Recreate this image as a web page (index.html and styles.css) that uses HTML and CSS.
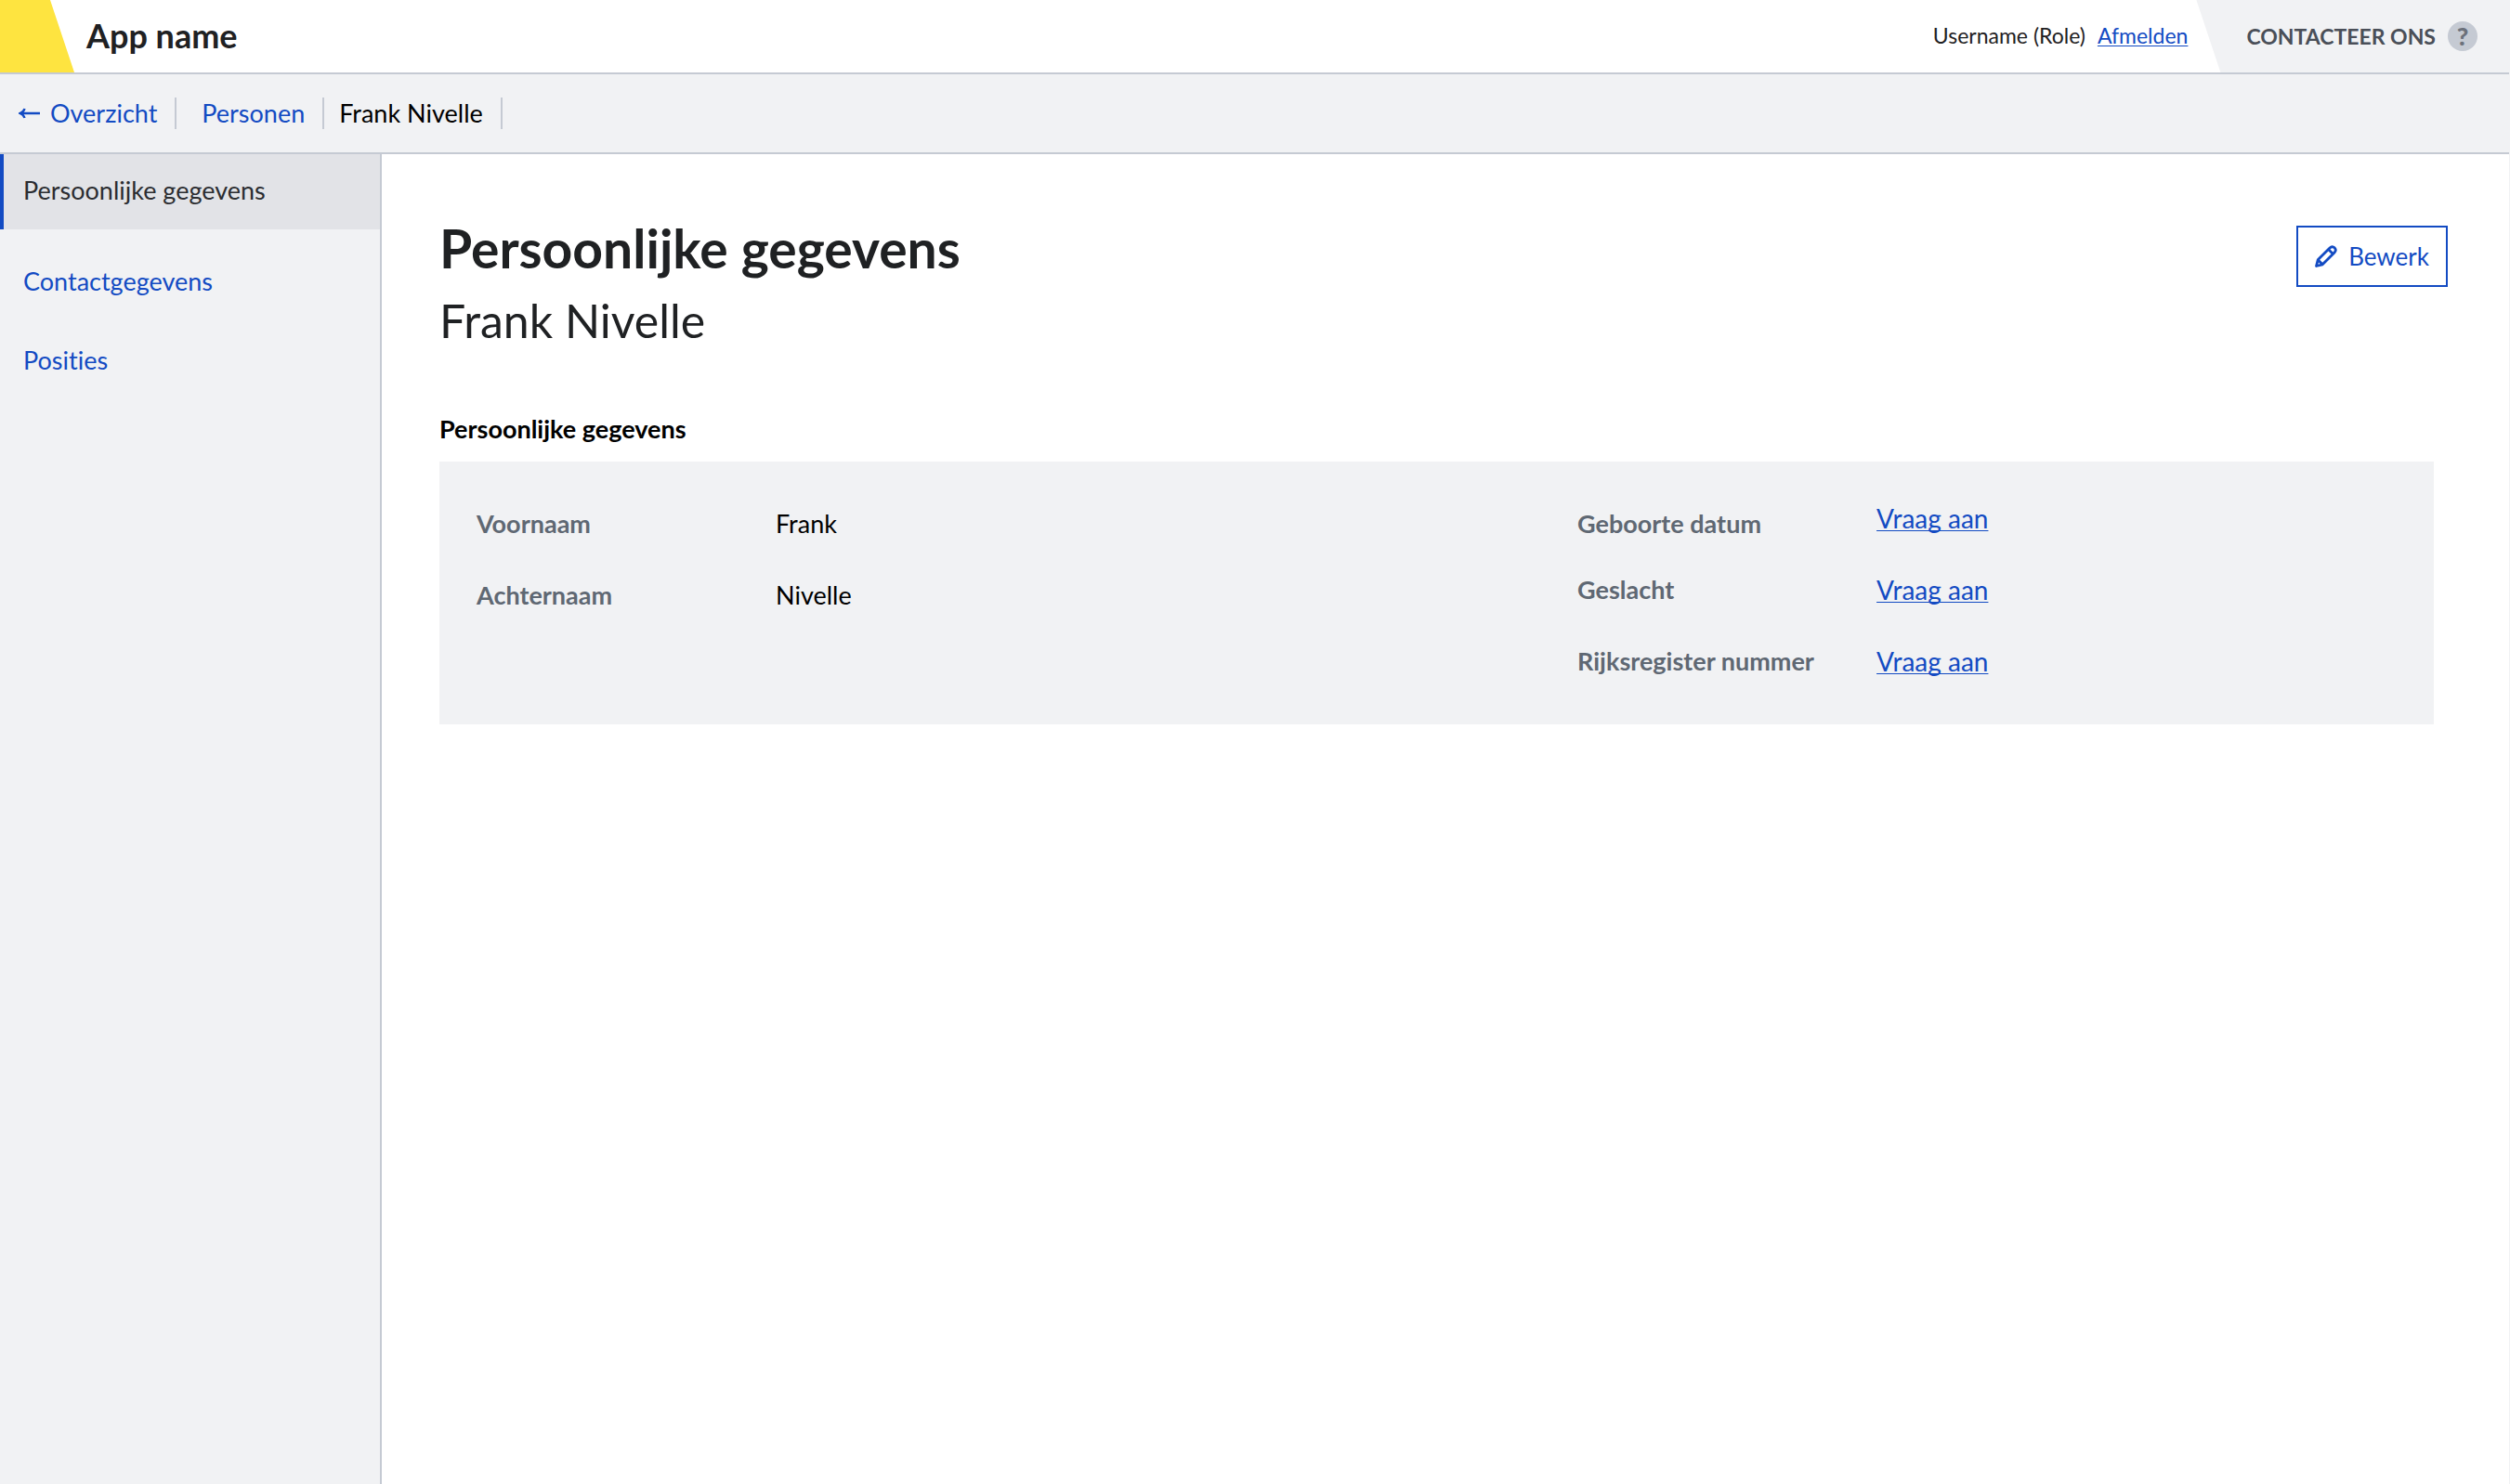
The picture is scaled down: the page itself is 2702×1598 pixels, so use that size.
FILE: index.html
```
<!DOCTYPE html>
<html lang="nl">
<head>
<meta charset="utf-8">
<meta name="viewport" content="width=device-width, initial-scale=1">
<title>Persoonlijke gegevens - Frank Nivelle</title>
<link rel="stylesheet" href="styles.css">
</head>
<body>
<header class="topbar">
  <span class="brand-mark"></span>
  <span class="app-name">App name</span>
  <div class="user">
    <span>Username (Role)</span>
    <a class="link" href="#">Afmelden</a>
  </div>
  <button class="contact" type="button">
    <span>CONTACTEER ONS</span>
    <span class="help">?</span>
  </button>
</header>

<nav class="breadcrumbs" aria-label="Kruimelpad">
  <a class="crumb crumb-back" href="#">
    <svg class="arrow" viewBox="0 0 24 14" aria-hidden="true"><path d="M2 7H23M6.500 2Q5.500 5.500 1.500 7Q5.500 8.500 6.500 12"/></svg>
    <span>Overzicht</span>
  </a>
  <a class="crumb crumb-parent" href="#">Personen</a>
  <span class="crumb crumb-current">Frank Nivelle</span>
</nav>

<div class="layout">
  <nav class="sidebar" aria-label="Persoon">
    <a class="side-item side-item-active" href="#">Persoonlijke gegevens</a>
    <a class="side-item" href="#">Contactgegevens</a>
    <a class="side-item" href="#">Posities</a>
  </nav>

  <main class="content">
    <div class="page-head">
      <div>
        <h1 class="title">Persoonlijke gegevens</h1>
        <p class="subtitle">Frank Nivelle</p>
      </div>
      <button class="edit" type="button">
        <svg class="pencil" viewBox="0 0 24 24" aria-hidden="true"><path d="M1.500 22.500L3.200 15.800L16 3Q18.500 .500 21.200 2.800Q23.500 5.500 21 8L8.200 20.800ZM14.500 4.500L19.500 9.500M3.200 15.800L8.200 20.800"/></svg>
        <span>Bewerk</span>
      </button>
    </div>

    <section class="section">
      <h2 class="section-title">Persoonlijke gegevens</h2>
      <div class="panel">
        <dl class="fields fields-text">
          <div class="field"><dt class="label">Voornaam</dt><dd class="value">Frank</dd></div>
          <div class="field"><dt class="label">Achternaam</dt><dd class="value">Nivelle</dd></div>
        </dl>
        <dl class="fields">
          <div class="field"><dt class="label label-low">Geboorte datum</dt><dd class="value"><a class="link request" href="#">Vraag aan</a></dd></div>
          <div class="field"><dt class="label">Geslacht</dt><dd class="value"><a class="link request" href="#">Vraag aan</a></dd></div>
          <div class="field"><dt class="label">Rijksregister nummer</dt><dd class="value"><a class="link request" href="#">Vraag aan</a></dd></div>
        </dl>
      </div>
    </section>
  </main>
</div>
</body>
</html>
```
FILE: styles.css
```
* { box-sizing: border-box; }

body {
  margin: 0;
  min-height: 100vh;
  display: flex;
  flex-direction: column;
  border-right: 1px solid #f1f2f4;
  background: #fff;
  color: #1f2123;
  font: 27px/34px Lato, "Open Sans", sans-serif;
  font-variant-ligatures: no-common-ligatures;
}

a { color: #134bc3; text-decoration: none; }

.link {
  text-decoration: underline 1px;
  text-underline-offset: 2px;
  text-decoration-skip-ink: none;
}

.topbar {
  display: flex;
  border-bottom: 2px solid #c5cad3;
  line-height: 78px;
}

.brand-mark {
  width: 80px;
  background: #fee440;
  clip-path: polygon(0 0, 54px 0, 100% 100%, 0 100%);
}

.app-name {
  margin-left: 13px;
  font-size: 36px;
  font-weight: bold;
  line-height: 76px;
}

.user {
  display: flex;
  gap: 13px;
  margin-left: auto;
  padding-right: 9px;
  font-size: 23px;
  line-height: 76px;
}

.contact {
  display: flex;
  align-items: center;
  gap: 13px;
  padding: 0 34px 0 54px;
  border: 0;
  background: #f1f2f4;
  color: #4a4f58;
  font: bold 23px/78px Lato, "Open Sans", sans-serif;
  clip-path: polygon(0 0, 100% 0, 100% 100%, 26px 100%);
}

.help {
  width: 32px;
  height: 32px;
  border-radius: 50%;
  background: #c5cad3;
  color: #6c717b;
  font-size: 27px;
  font-weight: 900;
  line-height: 32px;
  text-align: center;
}

.breadcrumbs {
  display: flex;
  align-items: center;
  min-height: 86px;
  padding-left: 20px;
  border-bottom: 2px solid #c5cad3;
  background: #f1f2f4;
}

.crumb {
  border-right: 2px solid #c5cad3;
  padding-right: 19px;
}

.crumb-back {
  display: flex;
  align-items: center;
  gap: 10px;
}

.crumb-parent { padding-left: 27px; }
.crumb-current { padding-left: 16px; color: #000; }

.arrow {
  width: 24px;
  height: 14px;
  fill: none;
  stroke: currentColor;
  stroke-width: 2.4;
}

.layout {
  flex: 1;
  display: flex;
}

.sidebar {
  flex: 0 0 411px;
  display: flex;
  flex-direction: column;
  gap: 4px;
  border-right: 2px solid #c5cad3;
  background: #f1f2f4;
}

.side-item {
  padding: 0 0 4px 21px;
  border-left: 4px solid transparent;
  line-height: 77px;
}

.side-item-active {
  margin-bottom: 13px;
  border-left-color: #134bc3;
  background: #e2e3e7;
  color: #2b2d31;
}

.content {
  flex: 1;
  padding: 68px 66px 60px 62px;
}

.page-head {
  display: flex;
  justify-content: space-between;
  align-items: flex-start;
}

.title {
  margin: 0;
  font-size: 57px;
  line-height: 66px;
}

.subtitle {
  margin: 14px 0 0;
  font-size: 50px;
  line-height: 62px;
}

.edit {
  display: flex;
  align-items: center;
  gap: 12px;
  height: 66px;
  margin-top: 9px;
  padding: 0 18px;
  border: 2px solid #134bc3;
  background: #fff;
  color: #134bc3;
  font: 26px/34px Lato, "Open Sans", sans-serif;
}

.pencil {
  width: 24px;
  height: 24px;
  fill: none;
  stroke: currentColor;
  stroke-width: 2.8;
  stroke-linejoin: round;
}

.section { margin: 69px 15px 0 0; }

.section-title {
  margin: 0 0 18px;
  color: #000;
  font-size: 27px;
  line-height: 34px;
}

.panel {
  display: grid;
  grid-template-columns: 43fr 32fr;
  padding: 44px 40px 8px;
  background: #f1f2f4;
}

.fields { margin: 0; }
.fields-text { padding-top: 6px; }

.field {
  display: flex;
  min-height: 77px;
}

.label {
  flex: 0 0 322px;
  color: #5f6873;
  font-weight: bold;
}

.label-low { padding-top: 6px; }

.value { margin: 0; color: #000; }

.request { font-size: 28px; }
```
